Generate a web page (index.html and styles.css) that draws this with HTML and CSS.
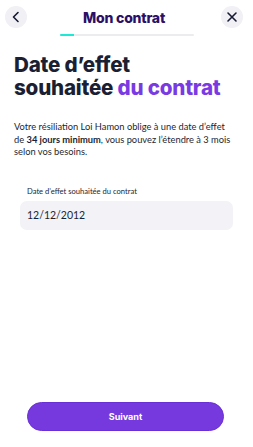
FILE: index.html
```html
<!DOCTYPE html>
<html lang="fr">
<head>
<meta charset="utf-8">
<link rel="stylesheet" href="styles.css">
</head>
<body>
<div class="screen">
  <header class="topbar">
    <button class="icon-btn" aria-label="Retour">
      <svg width="12" height="12" viewBox="0 0 12 12"><path d="M8 1.5 L3.5 6 L8 10.5" fill="none" stroke="#161a33" stroke-width="1.6" stroke-linecap="round" stroke-linejoin="round"/></svg>
    </button>
    <div class="title">Mon contrat</div>
    <button class="icon-btn" aria-label="Fermer">
      <svg width="12" height="12" viewBox="0 0 12 12"><path d="M2 2 L10 10 M10 2 L2 10" fill="none" stroke="#161a33" stroke-width="1.6" stroke-linecap="round"/></svg>
    </button>
  </header>
  <div class="progress"><div class="progress-fill" style="width:10.5%"></div></div>

  <main class="content">
    <h1 class="heading">Date d’effet<br>souhaitée <span class="accent">du contrat</span></h1>
    <p class="intro">Votre résiliation Loi Hamon oblige à une date d’effet de <strong>34 jours minimum</strong>, vous pouvez l’étendre à 3 mois selon vos besoins.</p>

    <div class="field">
      <label class="field-label">Date d’effet souhaitée du contrat</label>
      <div class="field-input">12/12/2012</div>
    </div>
  </main>

  <footer class="footer">
    <button class="primary">Suivant</button>
  </footer>
</div>
</body>
</html>
```
FILE: styles.css
```css
* { box-sizing: border-box; }
html, body { margin: 0; padding: 0; background: #fff; }
body { font-family: Lato, "Noto Sans", sans-serif; color: #1b1f33; }
.screen { width: 253px; height: 447px; display: flex; flex-direction: column; }
.topbar { display: flex; align-items: center; justify-content: space-between; padding: 6px 10px 0 5px; }
.icon-btn { width: 22px; height: 22px; border-radius: 50%; border: 0; background: #f0f0f5; display: flex; align-items: center; justify-content: center; padding: 0; }
.title { font-family: Inter, sans-serif; font-weight: 800; font-size: 14px; color: #2c0f66; letter-spacing: -0.2px; }
.progress { margin: 6px auto 0; width: 134px; height: 2px; background: #ececef; border-radius: 1px; overflow: hidden; }
.progress-fill { height: 100%; background: #1de9d4; }
.content { padding: 0 14px; flex: 1; }
.heading { font-family: Inter, sans-serif; font-weight: 800; font-size: 20.6px; line-height: 23px; letter-spacing: -0.2px; margin: 17px 0 0; color: #1b1f33; }
.accent { color: #7a3ae3; }
.intro { font-size: 9.3px; line-height: 12.5px; margin: 22px 0 0; max-width: 217px; color: #1b1f33; }
.intro strong { font-weight: 700; }
.field { margin: 27px 6px 0; }
.field-label { display: block; font-size: 7.6px; padding-left: 7px; margin-bottom: 5px; color: #1b1f33; }
.field-input { height: 29px; background: #f2f2f7; border-radius: 7px; display: flex; align-items: center; padding-left: 7px; font-size: 10.5px; color: #1b1f33; }
.footer { padding: 0 29px 16px 27px; }
.primary { width: 100%; height: 29px; border-radius: 15px; border: 1px solid #6a2fd6; background: #7639dd; color: #fff; font-family: Inter, sans-serif; font-weight: 700; font-size: 9px; }
```
